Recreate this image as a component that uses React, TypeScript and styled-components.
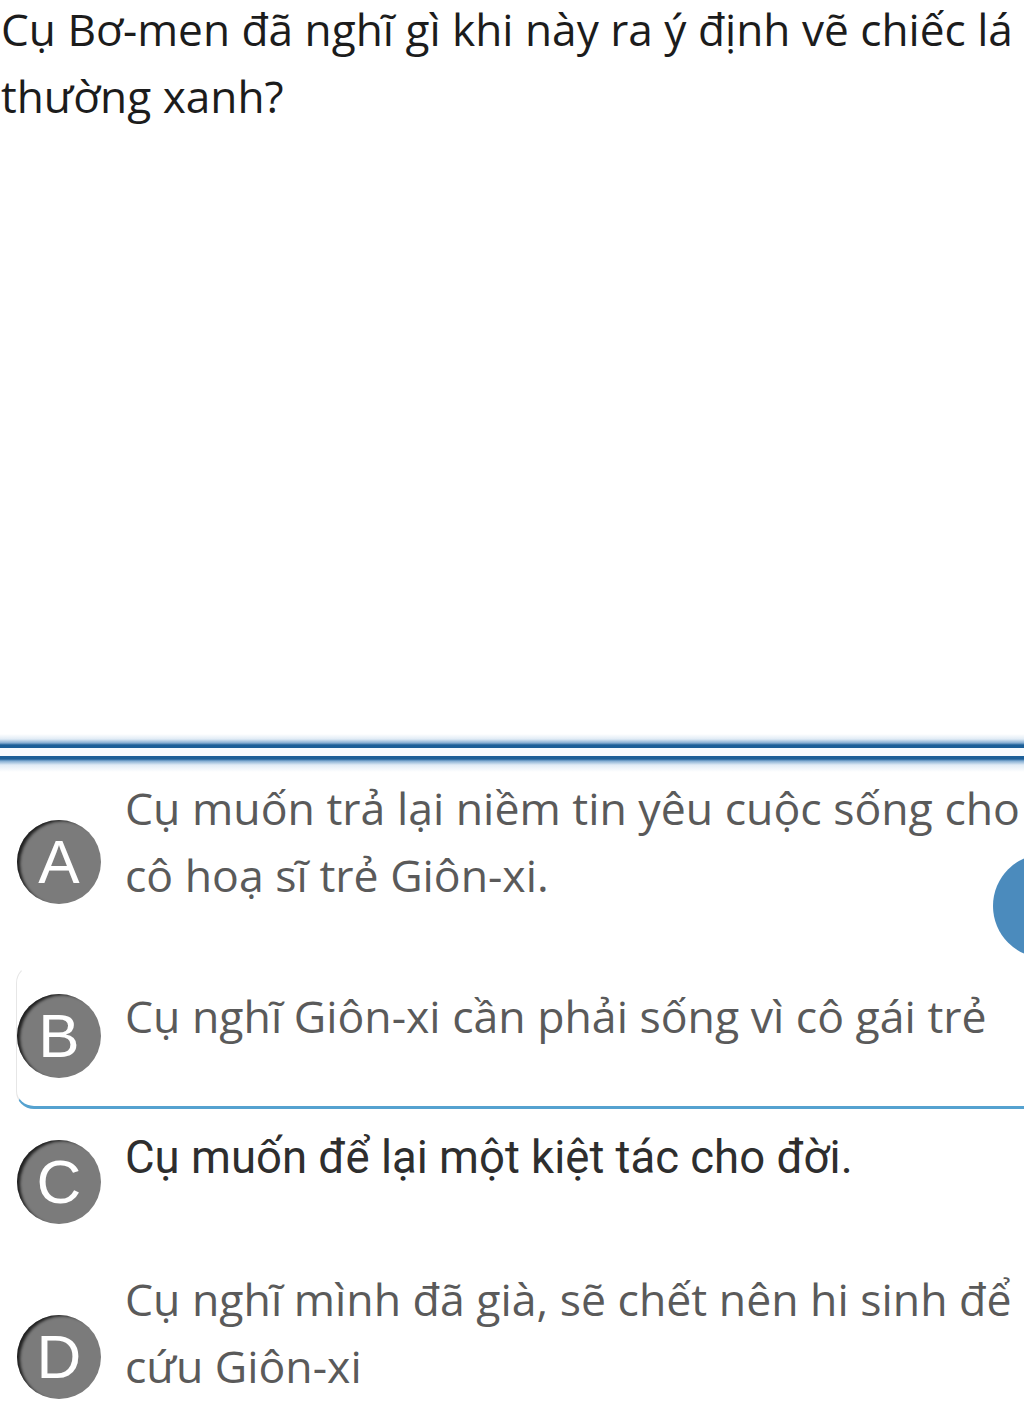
import React from "react";
import styled, { createGlobalStyle } from "styled-components";

const Global = createGlobalStyle`
  html, body { margin: 0; padding: 0; background: #ffffff; }
  body { font-family: "Open Sans", "Noto Sans", sans-serif; }
`;

const Page = styled.div`
  position: relative;
  width: 1024px;
  height: 1427px;
  overflow: hidden;
  background: #ffffff;
`;

const Question = styled.h1`
  margin: -4px 0 0 0;
  padding: 0 0 0 1px;
  font-family: "Open Sans", "Noto Sans", sans-serif;
  font-weight: 400;
  font-size: 44.2px;
  line-height: 67px;
  color: #1c1c1c;
  height: 738px;
  box-sizing: border-box;
  white-space: nowrap;
`;

const Divider = styled.div`
  height: 40px;
  background: linear-gradient(
    to bottom,
    rgba(255, 255, 255, 0) 0px,
    rgba(170, 200, 228, 0.35) 5px,
    rgba(90, 145, 195, 0.75) 9px,
    #1c5f98 11px,
    #1c5f98 14px,
    #f7fbfe 14px,
    #f7fbfe 22px,
    #1c5f98 22px,
    #1c5f98 25px,
    rgba(90, 145, 195, 0.75) 27px,
    rgba(170, 200, 228, 0.35) 31px,
    rgba(255, 255, 255, 0) 38px
  );
`;

const Options = styled.div`
  display: flex;
  flex-direction: column;
`;

const Row = styled.div<{ $mt: number }>`
  display: grid;
  grid-template-columns: 84px 1fr;
  column-gap: 24px;
  align-items: start;
  margin-top: ${(p) => p.$mt}px;
  padding-left: 17px;
`;

const Card = styled.div`
  margin-top: 57px;
  margin-left: 16px;
  height: 144px;
  box-sizing: border-box;
  border-left: 1px solid #e6e6e6;
  border-top: 1px solid transparent;
  border-bottom: 3px solid #55a2d0;
  border-radius: 18px 0 0 18px;
  padding-top: 16px;
  display: grid;
  grid-template-columns: 84px 1fr;
  column-gap: 24px;
  align-items: start;
`;

const Badge = styled.div<{ $offset: number }>`
  width: 84px;
  height: 84px;
  margin-top: ${(p) => p.$offset}px;
  border-radius: 50%;
  background: #7b7b7b;
  box-shadow: inset 4px 2px 3px -1px rgba(0, 0, 0, 0.75);
  display: flex;
  align-items: center;
  justify-content: center;
  color: #ffffff;
  font-family: "Liberation Sans", Arial, sans-serif;
  font-size: 62px;
  line-height: 1;
`;

const Text = styled.div<{ $alt?: boolean }>`
  font-family: ${(p) =>
    p.$alt ? `Roboto, "Liberation Sans", sans-serif` : `"Open Sans", "Noto Sans", sans-serif`};
  font-size: ${(p) => (p.$alt ? "45.5px" : "44.6px")};
  line-height: 67px;
  color: ${(p) => (p.$alt ? "#2e2e2e" : "#5a5a5a")};
  white-space: nowrap;
`;

const Fab = styled.div`
  position: absolute;
  left: 993px;
  top: 854px;
  width: 104px;
  height: 104px;
  border-radius: 50%;
  background: #4b8bbd;
`;

export default function App() {
  return (
    <Page>
      <Global />
      <Question>
        Cụ Bơ-men đã nghĩ gì khi này ra ý định vẽ chiếc lá
        <br />
        thường xanh?
      </Question>
      <Divider />
      <Options>
        <Row $mt={0}>
          <Badge $offset={46}>A</Badge>
          <Text>
            Cụ muốn trả lại niềm tin yêu cuộc sống cho
            <br />
            cô hoạ sĩ trẻ Giôn-xi.
          </Text>
        </Row>
        <Card>
          <Badge $offset={12}>B</Badge>
          <Text>Cụ nghĩ Giôn-xi cần phải sống vì cô gái trẻ</Text>
        </Card>
        <Row $mt={15}>
          <Badge $offset={16}>C</Badge>
          <Text $alt>Cụ muốn để lại một kiệt tác cho đời.</Text>
        </Row>
        <Row $mt={41}>
          <Badge $offset={50}>D</Badge>
          <Text>
            Cụ nghĩ mình đã già, sẽ chết nên hi sinh để
            <br />
            cứu Giôn-xi
          </Text>
        </Row>
      </Options>
      <Fab />
    </Page>
  );
}
